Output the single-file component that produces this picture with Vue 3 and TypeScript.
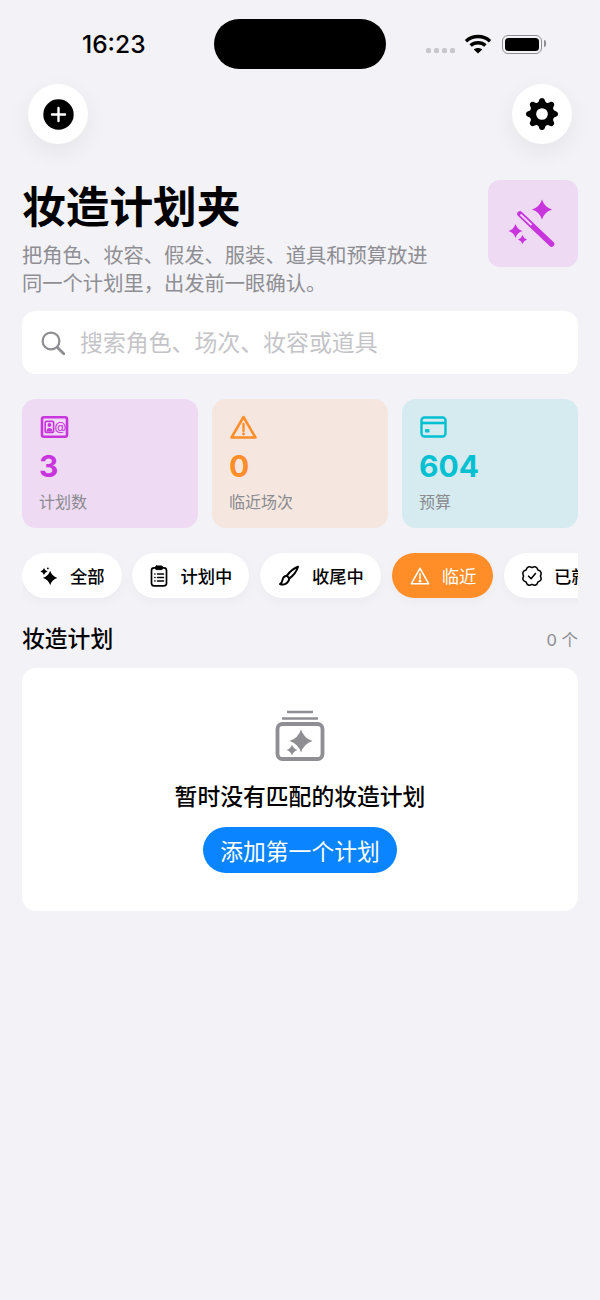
<script setup lang="ts">
interface Stat {
  value: string
  label: string
  tone: string
  icon: string
}

interface Chip {
  label: string
  icon: string
  active?: boolean
}

const stats: Stat[] = [
  { value: '3', label: '计划数', tone: 'purple', icon: 'contact' },
  { value: '0', label: '临近场次', tone: 'orange', icon: 'warning' },
  { value: '604', label: '预算', tone: 'teal', icon: 'card' },
]

const chips: Chip[] = [
  { label: '全部', icon: 'sparkles' },
  { label: '计划中', icon: 'clipboard' },
  { label: '收尾中', icon: 'brush' },
  { label: '临近', icon: 'warning', active: true },
  { label: '已就绪', icon: 'badge' },
]

const STAR = (cx: number, cy: number, r: number) => {
  const k = r * 0.24
  return `M${cx} ${cy - r}Q${cx + k} ${cy - k} ${cx + r} ${cy}Q${cx + k} ${cy + k} ${cx} ${cy + r}Q${cx - k} ${cy + k} ${cx - r} ${cy}Q${cx - k} ${cy - k} ${cx} ${cy - r}Z`
}

// 已就绪图标的波浪边
function scallop(cx: number, cy: number, inner: number, outer: number, lobes: number) {
  let d = ''
  for (let i = 0; i < lobes; i++) {
    const a0 = (i / lobes) * Math.PI * 2
    const a1 = ((i + 0.5) / lobes) * Math.PI * 2
    const a2 = ((i + 1) / lobes) * Math.PI * 2
    if (i === 0) d += `M${(cx + inner * Math.cos(a0)).toFixed(2)} ${(cy + inner * Math.sin(a0)).toFixed(2)}`
    d += `Q${(cx + outer * Math.cos(a1)).toFixed(2)} ${(cy + outer * Math.sin(a1)).toFixed(2)} ${(cx + inner * Math.cos(a2)).toFixed(2)} ${(cy + inner * Math.sin(a2)).toFixed(2)}`
  }
  return d + 'Z'
}
</script>

<template>
  <div class="page">
    <!-- 状态栏 -->
    <div class="status">
      <span class="time">16:23</span>
      <div class="island"></div>
      <div class="signal"><i></i><i></i><i></i><i></i></div>
      <svg class="wifi" width="28" height="20" viewBox="0 0 28 20" fill="none" stroke="#000" stroke-width="3.4">
        <path d="M2 7.2C8.8 1 19.2 1 26 7.2" />
        <path d="M6.6 11.6C10.8 7.8 17.2 7.8 21.4 11.6" />
        <path d="M14 19.6 9.8 15.4C12.2 13.4 15.8 13.4 18.2 15.4Z" fill="#000" stroke="none" />
      </svg>
      <div class="battery"><span></span></div>
    </div>

    <!-- 顶部按钮 -->
    <div class="toolbar">
      <button class="round">
        <svg width="31" height="31" viewBox="0 0 31 31">
          <circle cx="15.5" cy="15.5" r="15.2" fill="#000" />
          <path d="M15.5 9v13M9 15.5h13" stroke="#fff" stroke-width="2.4" stroke-linecap="round" />
        </svg>
      </button>
      <button class="round">
        <svg width="32" height="32" viewBox="0 0 16 16" fill="#000">
          <path d="M9.405 1.05c-.413-1.4-2.397-1.4-2.81 0l-.1.34a1.464 1.464 0 0 1-2.105.872l-.31-.17c-1.283-.698-2.686.705-1.987 1.987l.169.311c.446.82.023 1.841-.872 2.105l-.34.1c-1.4.413-1.4 2.397 0 2.81l.34.1a1.464 1.464 0 0 1 .872 2.105l-.17.31c-.698 1.283.705 2.686 1.987 1.987l.311-.169a1.464 1.464 0 0 1 2.105.872l.1.34c.413 1.4 2.397 1.4 2.81 0l.1-.34a1.464 1.464 0 0 1 2.105-.872l.31.17c1.283.698 2.686-.705 1.987-1.987l-.169-.311a1.464 1.464 0 0 1 .872-2.105l.34-.1c1.4-.413 1.4-2.397 0-2.81l-.34-.1a1.464 1.464 0 0 1-.872-2.105l.17-.31c.698-1.283-.705-2.686-1.987-1.987l-.311.169a1.464 1.464 0 0 1-2.105-.872l-.1-.34zM8 10.93a2.929 2.929 0 1 1 0-5.86 2.929 2.929 0 0 1 0 5.858z" />
        </svg>
      </button>
    </div>

    <div class="content">
      <!-- 标题区 -->
      <div class="hero">
        <div class="hero-text">
          <h1>妆造计划夹</h1>
          <p>把角色、妆容、假发、服装、道具和预算放进<br />同一个计划里，出发前一眼确认。</p>
        </div>
        <div class="hero-badge">
          <svg width="50" height="50" viewBox="0 0 50 50" fill="#c935dd">
            <path :d="STAR(34, 10.5, 10)" />
            <path :d="STAR(7.5, 32, 7)" />
            <path :d="STAR(14.5, 40.5, 4.5)" />
            <path d="M12 15 43.5 45" stroke="#c935dd" stroke-width="5.6" stroke-linecap="round" fill="none" />
            <path d="M13 16 23 25.5" stroke="#f0d9f4" stroke-width="1.8" stroke-linecap="round" fill="none" />
          </svg>
        </div>
      </div>

      <!-- 搜索 -->
      <div class="search">
        <svg width="24" height="24" viewBox="0 0 24 24" fill="none" stroke="#8e8e93" stroke-width="2.2" stroke-linecap="round">
          <circle cx="10" cy="10" r="8.4" />
          <path d="M16.2 16.2 23 23" stroke-width="2.8" />
        </svg>
        <span>搜索角色、场次、妆容或道具</span>
      </div>

      <!-- 统计 -->
      <div class="stats">
        <div v-for="s in stats" :key="s.label" class="stat" :class="s.tone">
          <svg class="stat-icon" width="30" height="24" viewBox="0 0 30 24" fill="none" stroke="currentColor" stroke-width="2.2" stroke-linejoin="round">
            <template v-if="s.icon === 'contact'">
              <rect x="3" y="2.2" width="25" height="19.6" rx="2" stroke-width="2.6" />
              <rect x="6.2" y="6.4" width="8.4" height="11" rx="1" stroke-width="1.6" />
              <circle cx="10.4" cy="10" r="1.9" fill="currentColor" stroke="none" />
              <path d="M7.4 16.4c0-4.6 6-4.6 6 0z" fill="currentColor" stroke="none" />
              <text x="15.6" y="16.4" class="at" fill="currentColor" stroke="none">@</text>
            </template>
            <template v-else-if="s.icon === 'warning'">
              <path d="M14.5 2 26.5 22.5H2.5Z" stroke-width="2.5" />
              <path d="M14.5 9v7" stroke-linecap="round" stroke-width="2.4" />
              <circle cx="14.5" cy="19" r="1.4" fill="currentColor" stroke="none" />
            </template>
            <template v-else>
              <rect x="2.5" y="2.5" width="24" height="19" rx="3" stroke-width="2.4" />
              <path d="M2.5 8h24" stroke-width="2.6" />
              <rect x="6" y="14" width="4.5" height="3.4" rx=".6" fill="currentColor" stroke="none" />
            </template>
          </svg>
          <div class="stat-value">{{ s.value }}</div>
          <div class="stat-label">{{ s.label }}</div>
        </div>
      </div>

      <!-- 筛选 -->
      <div class="chips">
        <div v-for="c in chips" :key="c.label" class="chip" :class="{ active: c.active }">
          <svg class="chip-icon" :class="c.icon" viewBox="0 0 22 22" fill="none" stroke="currentColor" stroke-width="1.7" stroke-linejoin="round" stroke-linecap="round">
            <template v-if="c.icon === 'sparkles'">
              <path :d="STAR(12.4, 13.4, 8.8)" fill="currentColor" stroke="none" />
              <path :d="STAR(4.9, 5.5, 4.4)" fill="currentColor" stroke="none" />
              <circle cx="9.6" cy="1.8" r="1.1" fill="currentColor" stroke="none" />
            </template>
            <template v-else-if="c.icon === 'clipboard'">
              <rect x="1.500" y="2.800" width="15" height="18" rx="2.600" />
              <rect x="5.500" y="1" width="7" height="3.600" rx="1" fill="currentColor" stroke-width="1" />
              <path d="M4.800 9h.2M4.800 12.500h.2M4.800 16h.2M7.500 9h6M7.500 12.500h6M7.500 16h6" stroke-width="1.500" />
            </template>
            <template v-else-if="c.icon === 'brush'">
              <path d="M20 1.800C15.500 3.500 11.300 7.300 8.800 10.800L11.400 13.400C15 10.800 18.700 6.300 20 1.800Z" stroke-width="2" />
              <path d="M8.800 10.800C5.800 11.200 4.800 13 4.400 15.300C4.100 17 3.200 18.200 2 19C5.500 20.300 10.200 19.300 11.400 13.400" stroke-width="2" />
            </template>
            <template v-else-if="c.icon === 'warning'">
              <path d="M11 2.500 20.500 19.500H1.500Z" />
              <path d="M11 8.500v5.500" />
              <circle cx="11" cy="16.600" r=".8" fill="currentColor" />
            </template>
            <template v-else>
              <path :d="scallop(11, 11, 9.200, 12.800, 8)" />
              <path d="M7.300 11.200 10 14 14.800 8.200" />
            </template>
          </svg>
          <span>{{ c.label }}</span>
        </div>
      </div>

      <!-- 列表 -->
      <div class="section-head">
        <h2>妆造计划</h2>
        <span>0 个</span>
      </div>

      <div class="empty">
        <svg width="50" height="52" viewBox="0 0 50 52" fill="none" stroke="#8e8e93">
          <path d="M12 2h26M7 8.500h36" stroke-width="2.600" />
          <rect x="2.500" y="14" width="45" height="35" rx="5" stroke-width="3.800" />
          <path :d="STAR(26, 31, 11.500)" fill="#8e8e93" stroke="none" />
          <path :d="STAR(17, 40, 5.500)" fill="#8e8e93" stroke="none" />
        </svg>
        <div class="empty-title">暂时没有匹配的妆造计划</div>
        <button class="primary">添加第一个计划</button>
      </div>
    </div>
  </div>
</template>

<style scoped>
.page {
  width: 600px;
  height: 1300px;
  overflow: hidden;
  background: #f2f2f7;
  font-family: 'Inter', 'Noto Sans CJK SC', sans-serif;
  color: #000;
}

.status {
  height: 84px;
  display: flex;
  align-items: flex-start;
  box-sizing: border-box;
  padding: 19px 0 0 82px;
}

.time {
  width: 132px;
  height: 50px;
  line-height: 50px;
  font-size: 24.500px;
  font-weight: 500;
}

.island {
  width: 172px;
  height: 50px;
  border-radius: 25px;
  background: #000;
}

.signal {
  display: flex;
  gap: 3px;
  margin: 29px 0 0 40px;
}

.signal i {
  width: 5px;
  height: 5px;
  border-radius: 1.500px;
  background: #c7c7cc;
}

.wifi {
  margin: 15px 0 0 9px;
}

.battery {
  position: relative;
  box-sizing: border-box;
  width: 40px;
  height: 19px;
  margin: 16px 0 0 10px;
  padding: 2px;
  border: 1.500px solid #8e8e93;
  border-radius: 6px;
}

.battery span {
  display: block;
  height: 100%;
  border-radius: 3.500px;
  background: #000;
}

.battery::after {
  content: '';
  position: absolute;
  right: -5px;
  top: 4px;
  width: 2.500px;
  height: 7px;
  border-radius: 0 2px 2px 0;
  background: #8e8e93;
}

.toolbar {
  height: 60px;
  display: flex;
  justify-content: space-between;
  padding: 0 28px;
}

.round {
  width: 60px;
  height: 60px;
  padding: 0;
  border: 0;
  border-radius: 50%;
  background: #fff;
  display: flex;
  align-items: center;
  justify-content: center;
  box-shadow: 0 8px 24px rgba(0, 0, 0, 0.06);
}

.content {
  padding: 36px 22px 0;
}

.hero {
  display: flex;
  justify-content: space-between;
  align-items: flex-start;
}

.hero-text h1 {
  margin: 0 0 6px;
  font-size: 43.700px;
  line-height: 56px;
  font-weight: 700;
}

.hero-text p {
  margin: 0;
  font-size: 20.300px;
  line-height: 27.500px;
  color: #8e8e93;
}

.hero-badge {
  width: 90px;
  height: 87px;
  border-radius: 12px;
  background: #eedaf3;
  display: flex;
  align-items: center;
  justify-content: center;
}

.search {
  margin-top: 14px;
  height: 63px;
  border-radius: 14px;
  background: #fff;
  display: flex;
  align-items: center;
  gap: 15px;
  padding-left: 19px;
  font-size: 22.900px;
  color: #c4c4c8;
}

.search span {
  margin-top: -4px;
}

.stats {
  margin-top: 25px;
  display: grid;
  grid-template-columns: repeat(3, 176px);
  gap: 14px;
}

.stat {
  height: 129px;
  box-sizing: border-box;
  border-radius: 14px;
  padding: 16px 17px 0;
}

.stat-icon {
  display: block;
}

.at {
  font-family: 'Inter', sans-serif;
  font-size: 12px;
  font-weight: 500;
}

.stat-value {
  margin-top: 7px;
  font-size: 30px;
  line-height: 40px;
  font-weight: 700;
}

.stat-label {
  margin-top: 4px;
  font-size: 16px;
  line-height: 24px;
  color: #8a8a8f;
}

.purple {
  background: #eedaf3;
  color: #c935dd;
}

.orange {
  background: #f5e7df;
  color: #ff8d28;
}

.teal {
  background: #d5ebf0;
  color: #00c0d1;
}

.chips {
  display: flex;
  align-items: center;
  gap: 10.800px;
  margin-top: 15px;
  padding: 10px 0 26px;
  overflow: hidden;
}

.chip {
  flex: none;
  height: 45px;
  border-radius: 23px;
  background: #fff;
  display: flex;
  align-items: center;
  gap: 12px;
  padding: 0 17px 0 18px;
  font-size: 17.300px;
  font-weight: 500;
  box-shadow: 0 4px 12px rgba(0, 0, 0, 0.03);
}

.chip.active {
  background: #ff8d28;
  color: #fff;
  font-weight: 400;
}

.chip-icon {
  width: 18px;
  height: 18px;
}

.chip-icon.clipboard {
  width: 22px;
  height: 22px;
  margin-right: -4px;
}

.chip-icon.badge,
.chip-icon.warning {
  width: 20px;
  height: 20px;
}

.chip-icon.brush {
  width: 22px;
  height: 22px;
}

.section-head {
  display: flex;
  justify-content: space-between;
  align-items: center;
  height: 30px;
}

.section-head h2 {
  margin: 0;
  font-size: 22.800px;
  line-height: 30px;
  font-weight: 500;
}

.section-head span {
  font-size: 16.500px;
  color: #8e8e93;
}

.empty {
  margin-top: 14px;
  height: 243px;
  box-sizing: border-box;
  border-radius: 14px;
  background: #fff;
  display: flex;
  flex-direction: column;
  align-items: center;
  padding-top: 42px;
}

.empty-title {
  margin-top: 15px;
  font-size: 22.800px;
  line-height: 40px;
  font-weight: 500;
}

.primary {
  margin-top: 10px;
  width: 194px;
  height: 46px;
  padding: 0;
  border: 0;
  border-radius: 23px;
  background: #0a84ff;
  color: #fff;
  font-family: inherit;
  font-size: 22.800px;
  font-weight: 400;
}
</style>

<style>
html,
body {
  margin: 0;
  background: #f2f2f7;
}
</style>
